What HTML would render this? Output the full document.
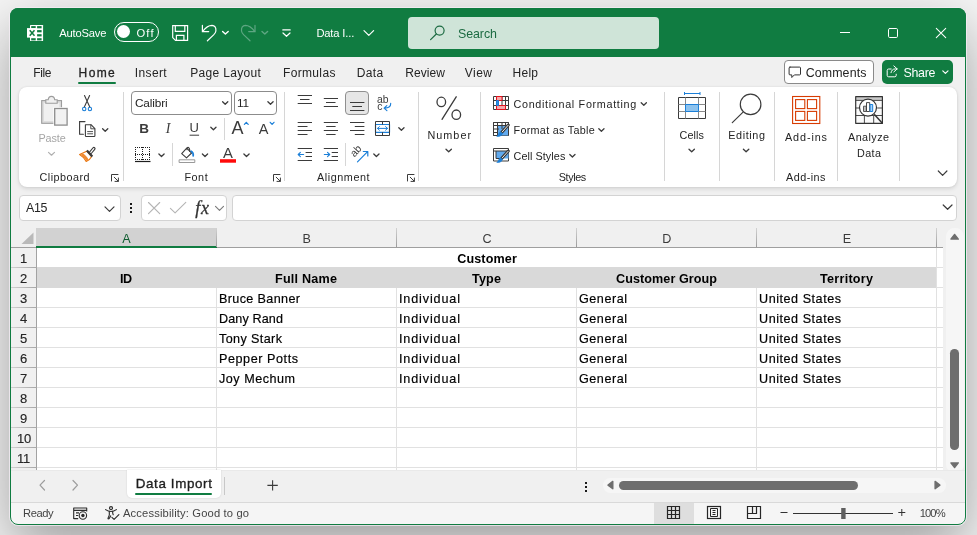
<!DOCTYPE html>
<html><head><meta charset="utf-8"><title>Excel</title>
<style>
*{box-sizing:border-box;margin:0;padding:0}
html,body{width:977px;height:535px;overflow:hidden;background:#f5f5f5}
body{background:#f5f5f5;font-family:"Liberation Sans",sans-serif;position:relative}
.a{position:absolute}
#labels{will-change:transform}
.t{position:absolute;white-space:nowrap;line-height:16px;height:16px;display:block}
#win{position:absolute;left:10px;top:8px;width:956px;height:517px;border-radius:8px;background:#f0f0f0;
 box-shadow:0 0 0 1px rgba(246,238,246,.75),0 22px 58px rgba(0,0,0,.36);overflow:hidden}
#winb{position:absolute;left:10px;top:8px;width:956px;height:517px;border-radius:8px;border:1px solid #107c41;pointer-events:none}
#title{position:absolute;left:0;top:0;width:956px;height:49px;background:#107c41}
#search{position:absolute;left:398px;top:9px;width:251px;height:32px;border-radius:4px;background:#cfe4d8}
#ribbon{position:absolute;left:9px;top:79px;width:938px;height:100px;border-radius:8px;background:#fff;
 box-shadow:0 2px 4px rgba(0,0,0,.11),0 0 2px rgba(0,0,0,.10)}
.sep{position:absolute;width:1px;background:#d6d6d6}
.box{position:absolute;background:#fff;border:1px solid #d3d3d3;border-radius:4px}
.cb{position:absolute;background:#fff;border:1px solid #8c8c8c;border-radius:4px}
#grid{position:absolute;left:27px;top:240px;width:906px;height:222px;background:#fff;overflow:hidden}
.hl{position:absolute;left:0;width:907px;height:1px;background:#e1e1e1}
.vl{position:absolute;top:0;width:1px;height:222px;background:#e1e1e1}
#status{position:absolute;left:0;top:494px;width:956px;height:23px;background:#f5f5f5;border-top:1px solid #d9d9d9}

</style></head>
<body>
<div id="win">
<div id="title"></div>
<div id="search"></div>
<div class="a" style="left:103.8px;top:14px;width:45px;height:19.6px;border:1px solid #fff;border-radius:10px"></div>
<div class="a" style="left:107px;top:17.3px;width:13px;height:13px;border-radius:50%;background:#fff"></div>
<div class="a" style="left:68.3px;top:74px;width:37.4px;height:2px;border-radius:1px;background:#107c41"></div>
<div class="a" style="left:774.3px;top:52.2px;width:89.6px;height:23.7px;border:1px solid #8a8a8a;border-radius:4px;background:#fff"></div>
<div class="a" style="left:872px;top:52.2px;width:71px;height:23.7px;border-radius:5px;background:#107c41"></div>
<div id="ribbon"></div>
<div class="sep" style="left:112.5px;top:84px;height:89px"></div>
<div class="sep" style="left:274.0px;top:84px;height:89px"></div>
<div class="sep" style="left:408.2px;top:84px;height:89px"></div>
<div class="sep" style="left:470.0px;top:84px;height:89px"></div>
<div class="sep" style="left:654.2px;top:84px;height:89px"></div>
<div class="sep" style="left:709.2px;top:84px;height:89px"></div>
<div class="sep" style="left:764.0px;top:84px;height:89px"></div>
<div class="sep" style="left:827.0px;top:84px;height:89px"></div>
<div class="sep" style="left:889.1px;top:84px;height:89px"></div>
<div class="sep" style="left:213.5px;top:109.5px;height:22.5px"></div>
<div class="sep" style="left:162.1px;top:135.0px;height:23.0px"></div>
<div class="sep" style="left:335.2px;top:135.3px;height:22.7px"></div>
<div class="cb" style="left:121px;top:83.2px;width:101px;height:23.6px"></div>
<div class="cb" style="left:224px;top:83.2px;width:43px;height:23.6px"></div>
<div class="cb" style="left:335.4px;top:83.2px;width:23.8px;height:23.6px;background:#e6e6e6;border-color:#8f8f8f"></div>
<div class="box" style="left:9px;top:187px;width:102px;height:26px"></div>
<div class="box" style="left:131px;top:187px;width:86px;height:26px"></div>
<div class="box" style="left:222px;top:187px;width:725px;height:26px"></div>
<div class="a" style="left:1px;top:220px;width:932px;height:20px;background:#f0f0f0;border-bottom:1px solid #9f9f9f"></div>
<div class="a" style="left:26.3px;top:220px;width:180.7px;height:20px;background:#d2d2d2;border-bottom:2px solid #107c41"></div>
<div class="a" style="left:206px;top:220px;width:1px;height:19px;background:linear-gradient(#d2d2d2,#9c9c9c)"></div>
<div class="a" style="left:386px;top:220px;width:1px;height:19px;background:linear-gradient(#d2d2d2,#9c9c9c)"></div>
<div class="a" style="left:566px;top:220px;width:1px;height:19px;background:linear-gradient(#d2d2d2,#9c9c9c)"></div>
<div class="a" style="left:746px;top:220px;width:1px;height:19px;background:linear-gradient(#d2d2d2,#9c9c9c)"></div>
<div class="a" style="left:926px;top:220px;width:1px;height:19px;background:linear-gradient(#d2d2d2,#9c9c9c)"></div>
<div class="a" style="left:1px;top:240px;width:26px;height:222px;background:#f0f0f0;border-right:1px solid #a2a2a2"></div>
<div class="a" style="left:1px;top:259px;width:26px;height:1px;background:linear-gradient(90deg,#d0d0d0,#a6a6a6)"></div>
<div class="a" style="left:1px;top:279px;width:26px;height:1px;background:linear-gradient(90deg,#d0d0d0,#a6a6a6)"></div>
<div class="a" style="left:1px;top:299px;width:26px;height:1px;background:linear-gradient(90deg,#d0d0d0,#a6a6a6)"></div>
<div class="a" style="left:1px;top:319px;width:26px;height:1px;background:linear-gradient(90deg,#d0d0d0,#a6a6a6)"></div>
<div class="a" style="left:1px;top:339px;width:26px;height:1px;background:linear-gradient(90deg,#d0d0d0,#a6a6a6)"></div>
<div class="a" style="left:1px;top:359px;width:26px;height:1px;background:linear-gradient(90deg,#d0d0d0,#a6a6a6)"></div>
<div class="a" style="left:1px;top:379px;width:26px;height:1px;background:linear-gradient(90deg,#d0d0d0,#a6a6a6)"></div>
<div class="a" style="left:1px;top:399px;width:26px;height:1px;background:linear-gradient(90deg,#d0d0d0,#a6a6a6)"></div>
<div class="a" style="left:1px;top:419px;width:26px;height:1px;background:linear-gradient(90deg,#d0d0d0,#a6a6a6)"></div>
<div class="a" style="left:1px;top:439px;width:26px;height:1px;background:linear-gradient(90deg,#d0d0d0,#a6a6a6)"></div>
<div class="a" style="left:1px;top:459px;width:26px;height:1px;background:linear-gradient(90deg,#d0d0d0,#a6a6a6)"></div>
<div id="grid">
<div class="a" style="left:0;top:19px;width:900px;height:21px;background:#d9d9d9"></div>
<div class="hl" style="top:59px"></div>
<div class="hl" style="top:79px"></div>
<div class="hl" style="top:99px"></div>
<div class="hl" style="top:119px"></div>
<div class="hl" style="top:139px"></div>
<div class="hl" style="top:159px"></div>
<div class="hl" style="top:179px"></div>
<div class="hl" style="top:199px"></div>
<div class="hl" style="top:219px"></div>
<div class="hl" style="top:239px"></div>
<div class="vl" style="left:179px;top:40px"></div>
<div class="vl" style="left:359px;top:40px"></div>
<div class="vl" style="left:539px;top:40px"></div>
<div class="vl" style="left:719px;top:40px"></div>
<div class="vl" style="left:899px;top:0"></div>
<div class="hl" style="top:19px;left:900px;width:7px"></div><div class="hl" style="top:39px;left:900px;width:7px"></div>
</div>
<div class="a" style="left:936px;top:220px;width:17.5px;height:245px;border-radius:8.5px;background:#f6f6f6"></div>
<div class="a" style="left:940.1px;top:340.8px;width:8.7px;height:101px;border-radius:4.3px;background:#6e6e6e"></div>
<div class="a" style="left:0;top:462px;width:956px;height:33px;background:#f0f0f0;border-top:1px solid #e9e9e9"></div>
<div class="a" style="left:116.6px;top:462px;width:94px;height:28.3px;border-radius:0 0 5px 5px;background:#fff;box-shadow:0 0 2px rgba(0,0,0,.14)"></div>
<div class="a" style="left:125.3px;top:484.6px;width:76.7px;height:2.1px;border-radius:1px;background:#107c41"></div>
<div class="a" style="left:213.9px;top:468.8px;width:1px;height:17.8px;background:#c8c8c8"></div>
<div class="a" style="left:592.8px;top:469.6px;width:343.6px;height:15.2px;border-radius:7.5px;background:#f6f6f6"></div>
<div class="a" style="left:608.7px;top:473px;width:239.5px;height:9.2px;border-radius:4.6px;background:#6e6e6e"></div>
<div id="status"></div>
<div class="a" style="left:644px;top:495px;width:40px;height:22px;background:#dedede"></div>
</div>
<div id="winb"></div>
<svg id="ico" class="a" style="left:0;top:0;will-change:transform" width="977" height="535" viewBox="0 0 977 535" fill="none" stroke-linecap="round" stroke-linejoin="round">
<!-- ===== title bar ===== -->
<g stroke="#fff" stroke-width="1.2">
 <!-- excel logo -->
 <rect x="30" y="25" width="13.1" height="16" rx="0.5" fill="#fff" stroke="none"/>
 <g fill="#107c41" stroke="none"><rect x="31.2" y="26.1" width="4.5" height="2.2"/><rect x="37.1" y="26.1" width="4.5" height="2.2"/><rect x="31.2" y="30.1" width="4.5" height="2.2"/><rect x="37.1" y="30.1" width="4.5" height="2.2"/><rect x="31.2" y="34.2" width="4.5" height="2.2"/><rect x="37.1" y="34.2" width="4.5" height="2.2"/><rect x="31.2" y="38.2" width="4.5" height="2.2"/><rect x="37.1" y="38.2" width="4.5" height="2.2"/></g>
 <rect x="27" y="28.1" width="9.6" height="9.5" fill="#fff" stroke="none"/>
 <path d="M29.700 30.300L34.500 35.800M34.500 30.300L29.700 35.800" stroke="#107c41" stroke-width="1.500" stroke-linecap="butt"/>
 <!-- save -->
 <path d="M172.700 25.700H187.600V40.400H175.500L172.700 37.600Z" stroke-linejoin="miter"/>
 <path d="M175.300 25.700V31.400H184.800V25.700M176.400 40.400V35.300H183.900V40.400" stroke-linejoin="miter"/>
 <!-- undo -->
 <path d="M202.400 25.400V31.600H208.700" stroke-width="1.200" stroke-linejoin="miter"/>
 <path d="M202.700 31.300C205.600 27.500 208.600 25.300 212 25.300C214.800 25.400 216.200 27.700 215.900 31C215.700 32.600 214.800 33.700 213.600 34.900L207.400 40.800" stroke-width="1.200"/>
 <path d="M222.600 31.400L225.400 34L228.200 31.400" stroke-width="1.400"/>
 <!-- customize qat -->
 <path d="M282.8 29.9H290.2M283 33L286.5 36.3L290 33" stroke-width="1.2"/>
 <!-- title chevron -->
 <path d="M364 30.6L368.8 35.4L373.6 30.6" stroke-width="1.2"/>
 <!-- window controls -->
 <path d="M840 32.500H850" stroke-width="1" stroke-linecap="butt"/>
 <rect x="888.500" y="28.500" width="9" height="9" rx="1.200" stroke-width="1"/>
 <path d="M936.300 28.300L945.700 37.700M945.700 28.300L936.300 37.700" stroke-width="1.050"/>
</g>
<!-- redo (disabled) -->
<g stroke="#5ea682" stroke-width="1.200">
 <path d="M255 25.400V31.600H248.700" stroke-linejoin="miter"/>
 <path d="M254.700 31.300C251.800 27.500 248.800 25.300 245.400 25.300C242.600 25.400 241.200 27.700 241.500 31C241.700 32.600 242.600 33.700 243.800 34.900L250 40.800"/>
 <path d="M262 31.400L264.800 34L267.600 31.400" stroke-width="1.400"/>
</g>
<!-- search icon -->
<g stroke="#1c6b42" stroke-width="1.2">
 <circle cx="439.6" cy="30.6" r="4.5"/><path d="M436.3 34L430.6 39.6"/>
</g>
<!-- comments icon -->
<g stroke="#333" stroke-width="1" transform="translate(0 .6)">
 <path d="M790 66.5h9.6a.9.9 0 0 1 .9.9v6a.9.9 0 0 1-.9.9h-5.2l-2.6 2.6v-2.6h-1.8a.9.9 0 0 1-.9-.9v-6a.9.9 0 0 1 .9-.9z"/>
</g>
<!-- share icon -->
<g stroke="#fff" stroke-width="1" transform="translate(-.8 -.3)">
 <path d="M892 69.3h-2.6a1.4 1.4 0 0 0-1.4 1.4v5a1.4 1.4 0 0 0 1.4 1.4h6.2a1.4 1.4 0 0 0 1.4-1.4v-1.2"/>
 <path d="M894.6 66.2l3.4 3-3.4 3M898 69.2h-2c-2.4 0-3.8 1.6-4.2 3.8"/>
 <path d="M943.6 71.2L946.2 73.7L948.8 71.2" stroke-width="1.2"/>
</g>
<!-- ===== ribbon: clipboard ===== -->
<g stroke="#9c9c9c" stroke-width="1.100" stroke-linejoin="miter">
 <rect x="41.700" y="100.600" width="19.800" height="22.700" fill="#dddddd"/>
 <rect x="44" y="103" width="15.400" height="18" fill="#f0f0f0" stroke="none"/>
 <path d="M45.800 103.200V99.800H48.200C48.600 95.200 54.300 95.200 54.700 99.800H57.200V103.200Z" fill="#f0f0f0"/>
 <rect x="53.400" y="107.200" width="15" height="19.200" fill="#fff" stroke="none"/>
 <rect x="54.700" y="108.500" width="12.400" height="16.600" fill="#f2f2f2" stroke="#8e8e8e" stroke-width="1.300"/>
 <path d="M48.500 152.400L51.500 155.200L54.500 152.400" stroke="#b0b0b0" stroke-width="1.200" stroke-linejoin="round"/>
</g>
<!-- scissors -->
<g stroke-width="1.1">
 <path d="M84.5 95.6L90 107.4M89.6 95.6L84.1 107.4" stroke="#3b3b3b"/>
 <circle cx="84.2" cy="109" r="1.7" stroke="#1b7fd8"/><circle cx="89.9" cy="109" r="1.7" stroke="#1b7fd8"/>
</g>
<!-- copy -->
<g stroke="#3b3b3b" stroke-width="1.1">
 <path d="M85 121.6H79.6V134.3H83.4" stroke-linejoin="miter"/>
 <path d="M85.4 124.7h5.6l3.9 3.9v7.1a.8.8 0 0 1-.8.8h-7.900a.8.8 0 0 1-.8-.8z" fill="#fff"/>
 <path d="M90.8 124.900v3.900h3.900" stroke-width="0.9"/>
 <path d="M87.6 131.6h5M87.6 133.8h5" stroke-width="0.9"/>
 <path d="M102.6 128.700L105.2 131.200L107.8 128.700" stroke-width="1.3"/>
</g>
<!-- format painter -->
<g stroke-width="1">
 <path d="M86.700 151.200L79.600 154.500C82.500 156.200 84.800 158.700 86.200 161.500C88.600 160.400 90.600 158.600 91.700 156.500Z" fill="#fff" stroke="#e8740c" stroke-width="1.100"/>
 <path d="M80.300 154.700C83 156.300 85 158.500 86.300 161L88.600 159.600C87.300 157.300 85.400 155.200 83.100 153.600Z" fill="#ef8a32" stroke="none"/>
 <path d="M86.900 150.400L92.300 156.500" stroke="#3b3b3b" stroke-width="2.200" stroke-linecap="butt"/>
 <path d="M90.600 152.500L93.900 148.600" stroke="#3b3b3b" stroke-width="3.400" stroke-linecap="round"/>
 <path d="M90.800 152.300L93.800 148.700" stroke="#fff" stroke-width="1.300" stroke-linecap="round"/>
</g>
<!-- dialog launchers -->
<g stroke="#3b3b3b" stroke-width="1">
 <path d="M111.500 181V174.500H118M114.200 177.200l4 4M118.400 178v3.400H115"/>
 <path d="M273.500 181V174.500H280M276.200 177.200l4 4M280.400 178v3.400H277"/>
 <path d="M407.500 181V174.500H414M410.200 177.200l4 4M414.400 178v3.400H411"/>
</g>
<!-- ===== ribbon: font ===== -->
<g stroke="#3b3b3b" stroke-width="1.3">
 <path d="M222.600 101.800L225.200 104.300L227.800 101.800"/>
 <path d="M267.900 101.800L270.500 104.300L273.100 101.800"/>
 <path d="M210.800 127.300L213.400 129.800L216 127.300"/>
 <path d="M158.900 154L161.500 156.500L164.100 154"/>
 <path d="M202.400 154L205 156.500L207.600 154"/>
 <path d="M243.900 154L246.500 156.500L249.100 154"/>
</g>
<g fill="#3b3b3b" stroke="none" font-family="Liberation Sans, sans-serif">
 <text x="139.300" y="132.800" font-size="13.500" font-weight="bold">B</text>
 <text x="165.800" y="132.800" font-size="14" font-style="italic" font-family="Liberation Serif, serif">I</text>
 <text x="189.400" y="132.400" font-size="13">U</text>
 <text x="231.400" y="133.900" font-size="18">A</text>
 <text x="258.800" y="133.900" font-size="14.500">A</text>
 <text x="223" y="157.700" font-size="14.800">A</text>
</g>
<path d="M190 135.200H198.700" stroke="#3b3b3b" stroke-width="1"/>
<path d="M244.400 124.400L246.300 122.300L248.200 124.400M270.200 122.300L272.100 124.400L274 122.300" stroke="#1b7fd8" stroke-width="1.2"/>
<!-- borders -->
<g stroke="#1f1f1f">
 <path d="M135 147.500H150.500M135 159.500H150.500M135 154.500H150.500" stroke-width="1" stroke-dasharray="1 1" stroke-linecap="butt"/>
 <path d="M135.500 147V160M142.500 147V160M149.500 147V160" stroke-width="1" stroke-dasharray="1 1" stroke-linecap="butt"/>
 <path d="M135 161.500H150.500" stroke-width="1.200" stroke-linecap="butt"/>
</g>
<!-- fill bucket -->
<g stroke="#3b3b3b" stroke-width="1.100">
 <path d="M181.700 153.700L186.700 148.100L191.600 153L186.500 157.900Z" fill="#fff"/>
 <path d="M186.900 149.800c-.300-2.300 1.400-3.100 2.200-1.700c.500 .800 .700 1.900 .700 3.300" />
 <path d="M191.200 151.200c1.700 .900 2.300 2.600 2 4.600" stroke="#1b7fd8" stroke-width="1.700"/>
 <rect x="179.500" y="159.800" width="15.300" height="2.700" fill="#fff" stroke="#999" stroke-width="1"/>
</g>
<rect x="220" y="159.200" width="16" height="3.500" fill="#ff0a0a"/>
<!-- ===== ribbon: alignment ===== -->
<g stroke="#3b3b3b" stroke-width="1" stroke-linecap="butt">
 <!-- top / middle / bottom -->
 <path d="M297.700 95.500H312M300 99.500H309.500M297.700 103.500H312"/>
 <path d="M323.800 98.500H338M326 102.500H335.500M323.800 106.500H338"/>
 <path d="M350 102.500H364.400M352.300 106.500H362M350 110.500H364.400"/>
 <!-- left / center / right -->
 <path d="M297.700 122.500H312M297.700 126.500H307.500M297.700 130.500H312M297.700 134.500H307.500"/>
 <path d="M323.800 122.500H338M326.200 126.500H335.600M323.800 130.500H338M326.200 134.500H335.600"/>
 <path d="M350 122.500H364.400M354.800 126.500H364.400M350 130.500H364.400M354.800 134.500H364.400"/>
 <!-- indents -->
 <path d="M297.700 148.500H312M305.600 152.500H312M305.600 156.500H312M297.700 160.500H312"/>
 <path d="M323.800 148.500H338M331.700 152.500H338M331.700 156.500H338M323.800 160.500H338"/>
</g>
<g stroke="#1b7fd8" stroke-width="1.100">
 <path d="M298.300 154.500H303.600M300.400 152.300L298.200 154.500L300.400 156.700"/>
 <path d="M324.300 154.500H329.600M327.500 152.300L329.700 154.500L327.500 156.700"/>
</g>
<!-- wrap text -->
<g fill="#3b3b3b" stroke="none" font-family="Liberation Sans, sans-serif" font-size="10.400">
 <text x="377" y="102.800">ab</text><text x="377.200" y="109.800">c</text>
</g>
<path d="M390.700 103.400C390.900 106.800 388.400 108.200 384.300 108.100M386.800 105.600L384.100 108.100L386.900 110.600" stroke="#1b7fd8" stroke-width="1.200"/>
<!-- merge & center -->
<g stroke-linecap="butt">
 <rect x="375.500" y="124.500" width="14" height="7.800" fill="#fff" stroke="#1b7fd8" stroke-width="1.200"/>
 <path d="M375.500 121.500H389.500V135.500H375.500zM382.500 121.500V124.500M382.500 132.300V135.500" stroke="#3b3b3b" stroke-width="1"/>
 <path d="M377.600 128.400H387.400M379.400 126.600L377.500 128.400L379.400 130.200M385.600 126.600L387.500 128.400L385.600 130.200" stroke="#1b7fd8" stroke-width="1" stroke-linecap="round"/>
</g>
<path d="M398.800 127.800L401.400 130.300L404 127.800M373.800 154L376.400 156.500L379 154" stroke="#3b3b3b" stroke-width="1.300"/>
<!-- orientation -->
<g>
 <text transform="translate(354.400 157.400) rotate(-47)" fill="#3b3b3b" stroke="none" font-family="Liberation Sans, sans-serif" font-size="10.400">ab</text>
 <path d="M357.500 161.800L367.600 151.700M363.300 151.500H367.800V156" stroke="#1b7fd8" stroke-width="1.200"/>
</g>
<!-- ===== number ===== -->
<g stroke="#3b3b3b" stroke-width="1.300">
 <ellipse cx="441.300" cy="101.900" rx="4.300" ry="4.700"/><ellipse cx="456.300" cy="114.700" rx="4.300" ry="4.700"/>
 <path d="M456.200 96.800L442 119.300"/>
 <path d="M446 149.200L448.700 151.800L451.400 149.200"/>
 <path d="M689 149.200L691.700 151.800L694.400 149.200"/>
 <path d="M743.400 149.200L746.100 151.800L748.800 149.200"/>
 <path d="M641.200 102.800L643.800 105.300L646.400 102.800M598.800 128.800L601.400 131.300L604 128.800M569.800 154.500L572.400 157L575 154.500"/>
</g>
<!-- ===== styles icons ===== -->
<g stroke-linecap="butt" stroke-width="1">
 <!-- conditional formatting -->
 <rect x="493.500" y="96.500" width="15" height="13" fill="#fff" stroke="#3b3b3b"/>
 <path d="M496.500 96.500V109.500M502 96.500V109.500M505.500 96.500V109.500M493.500 100.500H508.500M493.500 105.500H508.500" stroke="#3b3b3b"/>
 <rect x="496.500" y="96.500" width="5.500" height="4" fill="#f5a9ab" stroke="#e8111c"/>
 <rect x="496.500" y="105.500" width="9" height="4" fill="#f5a9ab" stroke="#e8111c"/>
 <rect x="496.500" y="100.500" width="2" height="5" fill="#2f8be0" stroke="#1b7fd8"/>
 <!-- format as table -->
 <rect x="493.500" y="122.500" width="15" height="13" fill="#fff" stroke="#3b3b3b"/>
 <rect x="497.500" y="125.500" width="11" height="10" fill="#62aaee" stroke="none"/>
 <path d="M497.500 122.500V135.500M502 122.500V129M505.500 122.500V126M493.500 125.500H508.500M493.500 129H499M493.500 132.500H497.500" stroke="#3b3b3b"/>
 <path d="M493.500 122.500H508.500V135.500M493.500 122.500V135.500H497" stroke="#3b3b3b" fill="none"/>
 <path d="M508.300 125L501.800 132.300" stroke="#3b3b3b" stroke-width="3" stroke-linecap="round"/>
 <path d="M508.100 125.300L502.200 131.900" stroke="#e6e6e6" stroke-width="1" stroke-linecap="round"/>
 <path d="M502.600 133.400c-.600 2-2.700 3.200-5.800 3.100 1.600-1.100 1.600-3.400 3.400-4.800z" fill="#1b7fd8" stroke="#1b7fd8" stroke-width="0.600" stroke-linejoin="round"/>
 <!-- cell styles -->
 <rect x="493.500" y="148.500" width="15" height="12.500" fill="#fff" stroke="#3b3b3b"/>
 <rect x="496" y="151" width="12.500" height="7.500" fill="#62aaee" stroke="none"/>
 <path d="M493.500 151H508.500M496 151V158.500H500" stroke="#3b3b3b"/>
 <path d="M508.300 151L501.800 158.300" stroke="#3b3b3b" stroke-width="3" stroke-linecap="round"/>
 <path d="M508.100 151.300L502.200 157.900" stroke="#e6e6e6" stroke-width="1" stroke-linecap="round"/>
 <path d="M502.600 159.400c-.600 2-2.700 3.200-5.800 3.100 1.600-1.100 1.600-3.400 3.400-4.800z" fill="#1b7fd8" stroke="#1b7fd8" stroke-width="0.600" stroke-linejoin="round"/>
</g>
<!-- ===== cells ===== -->
<g stroke-linecap="butt" stroke-width="1">
 <rect x="678.500" y="97.500" width="27" height="21" fill="#fff" stroke="#3b3b3b"/>
 <path d="M685.500 97.500V118.500M698.500 97.500V118.500M678.500 104.500H705.500M678.500 111.500H705.500" stroke="#8a8a8a"/>
 <rect x="685.500" y="104.500" width="13" height="7" fill="#8ec3ee" stroke="#1b7fd8"/>
 <path d="M684.500 93.500H700M684.500 92V95M700 92V95" stroke="#1b7fd8"/>
</g>
<!-- ===== editing ===== -->
<g stroke="#3b3b3b" stroke-width="1.200">
 <circle cx="750.600" cy="104.400" r="10.300"/><path d="M743.300 111.900L732.300 122.600"/>
</g>
<!-- ===== add-ins ===== -->
<g stroke="#d83b01" stroke-width="1.100" stroke-linecap="butt" stroke-linejoin="miter">
 <rect x="792.600" y="96.500" width="27.200" height="27"/>
 <rect x="795.600" y="99.600" width="9.200" height="9"/><rect x="807.400" y="99.600" width="9.200" height="9"/>
 <rect x="795.600" y="111.400" width="9.200" height="9"/><rect x="807.400" y="111.400" width="9.200" height="9"/>
</g>
<!-- ===== analyze data ===== -->
<g stroke-linecap="butt" stroke-width="1">
 <rect x="855.700" y="96.600" width="26.700" height="26.700" fill="#fafafa" stroke="none"/>
 <rect x="856" y="97" width="26.300" height="3" fill="#c9c9c9" stroke="none"/>
 <path d="M855.700 100.400H882.400M855.700 108H859M877.200 108H882.400M855.700 115.500H882.400M864.400 115.500V123.300M873.700 115.500V123.300" stroke="#4a4a4a"/>
 <rect x="855.700" y="96.600" width="26.700" height="26.700" fill="none" stroke="#333" stroke-width="1.200"/>
 <circle cx="868" cy="107.600" r="8.500" fill="#fff" stroke="#333" stroke-width="1.200"/>
 <rect x="863.500" y="106.200" width="2.800" height="5.300" fill="#c4c4c4" stroke="#4a4a4a" stroke-width="0.900"/>
 <rect x="866.500" y="102.600" width="3.200" height="8.900" fill="#fff" stroke="#333" stroke-width="0.900"/>
 <rect x="870.100" y="104.500" width="2.600" height="7" fill="#a6d3fb" stroke="#1b7fd8" stroke-width="1"/>
 <path d="M874.200 114.300L882.600 123.400" stroke="#333" stroke-width="1.500"/>
</g>
<path d="M938.300 171L942.600 175.300L946.900 171" stroke="#3b3b3b" stroke-width="1.200"/>
<!-- ===== formula bar ===== -->
<path d="M105 206.800L109.500 211.300L114 206.800" stroke="#3b3b3b" stroke-width="1.200"/>
<g fill="#1a1a1a" stroke="none"><rect x="130" y="203" width="2" height="2"/><rect x="130" y="207" width="2" height="2"/><rect x="130" y="211" width="2" height="2"/></g>
<g stroke="#b4b4b4" stroke-width="1.100">
 <path d="M148.500 202.500L159.700 213.700M159.700 202.500L148.500 213.700"/>
 <path d="M170.400 208.300L175.100 212.800L185.800 202.400"/>
</g>
<path d="M215.500 206.300L219.500 210.300L223.500 206.300" stroke="#7a7a7a" stroke-width="1.100"/>
<path d="M943.200 205L947.600 209.300L952 205" stroke="#3b3b3b" stroke-width="1.200"/>
<!-- select all triangle -->
<path d="M33.500 232.500V244H21.500z" fill="#b9b9b9" stroke="none"/>
<!-- v scrollbar arrows -->
<g fill="#6e6e6e" stroke="#6e6e6e" stroke-width="1.400">
 <path d="M954.600 234.400L958.300 239.100H950.900z"/>
 <path d="M954.600 467.600L958.300 462.900H950.900z"/>
 <path d="M608 485.100L612.800 481.400V488.800z"/>
 <path d="M939.900 485.100L935.100 481.400V488.800z"/>
</g>
<!-- sheet nav -->
<g stroke="#9c9c9c" stroke-width="1.200">
 <path d="M44.500 480.500L40 485.200L44.500 490"/>
 <path d="M73 480.500L77.500 485.200L73 490"/>
</g>
<path d="M267.400 485.400H277.800M272.600 480.200V490.600" stroke="#3b3b3b" stroke-width="1.100" stroke-linecap="butt"/>
<g fill="#1a1a1a" stroke="none"><rect x="585" y="482" width="2" height="2"/><rect x="585" y="486" width="2" height="2"/><rect x="585" y="490" width="2" height="2"/></g>
<!-- ===== status bar ===== -->
<g stroke="#444" stroke-width="1" stroke-linecap="butt">
 <!-- macro -->
 <path d="M73.700 519V508H86.700V511.600M73.700 510.400H86.700M73.700 518.600H78.200M76 512.900H79M76 515.500H78.200" stroke="#2b2b2b" stroke-width="1.100"/>
 <circle cx="82.900" cy="515.500" r="3.700" fill="#f5f5f5" stroke="#2b2b2b" stroke-width="1.100"/><circle cx="82.900" cy="515.500" r="1.700" fill="#2b2b2b" stroke="none"/>
 <!-- accessibility -->
 <g stroke="#2b2b2b" stroke-width="1.150" stroke-linecap="round" fill="none">
 <circle cx="111" cy="508.100" r="1.500"/>
 <path d="M105.600 509.600c1.800 1.300 3.400 1.900 5.400 1.900s3.600-.600 5.400-1.900"/>
 <path d="M109.300 511.400c.400 2.400 .200 4.600-1.200 6.600c-.400 .700 .600 1.200 1.100 .500l1.500-2.600M112.700 511.400c-.200 1.200 0 2.300 .500 3.300"/>
 <path d="M111.900 517.300l2.200 2.100 4.800-4.700"/>
 </g>
 <!-- normal view -->
 <g stroke="#262626" stroke-width="1.200" fill="none" stroke-linejoin="miter">
 <path d="M667.500 506.500H679.500V518.500H667.500ZM671.500 506.500V518.500M675.500 506.500V518.500M667.500 510.500H679.500M667.500 514.500H679.500"/>
 <!-- page layout view -->
 <rect x="707.500" y="506.500" width="13" height="12"/>
 <path d="M710.500 508.500H717.500V516.500H710.500Z" stroke-width="1"/><path d="M712.500 510.500H715.500M712.500 512.500H715.500M712.500 514.500H715.500" stroke-width="1"/>
 <!-- page break view -->
 <path d="M747.500 506.500H760.500V518.500H747.500ZM752.500 506.500V513.500M747.500 513.500H756.500V506.500"/>
 </g>
 <!-- zoom -->
 <path d="M780.500 512.500H787.500M793 513.500H893M898.300 512.500H905.300M901.800 509V516" stroke="#333"/>
</g>
<rect x="841.200" y="508" width="4.400" height="11" fill="#5f5f5f" stroke="none"/>
</svg>

<div id="labels">
<span class="t" style="left:59.30px;top:24.80px;font-size:11.2px;color:#ffffff;letter-spacing:-0.202px">AutoSave</span>
<span class="t" style="left:136.50px;top:24.60px;font-size:11.2px;color:#ffffff;letter-spacing:1.141px">Off</span>
<span class="t" style="left:316.40px;top:24.80px;font-size:11.2px;color:#ffffff;letter-spacing:-0.161px">Data I...</span>
<span class="t" style="left:458.00px;top:25.70px;font-size:12.4px;color:#1c6b42;letter-spacing:-0.073px">Search</span>
<span class="t" style="left:33.20px;top:65.00px;font-size:12px;color:#242424;letter-spacing:-0.348px">File</span>
<span class="t" style="left:78.60px;top:65.00px;font-size:12px;color:#242424;-webkit-text-stroke:0.3px currentColor;letter-spacing:1.395px">Home</span>
<span class="t" style="left:134.80px;top:65.00px;font-size:12px;color:#242424;letter-spacing:0.357px">Insert</span>
<span class="t" style="left:190.20px;top:65.00px;font-size:12px;color:#242424;letter-spacing:0.331px">Page Layout</span>
<span class="t" style="left:283.00px;top:65.00px;font-size:12px;color:#242424;letter-spacing:0.341px">Formulas</span>
<span class="t" style="left:356.80px;top:65.00px;font-size:12px;color:#242424;letter-spacing:0.347px">Data</span>
<span class="t" style="left:405.20px;top:65.00px;font-size:12px;color:#242424;letter-spacing:0.088px">Review</span>
<span class="t" style="left:464.80px;top:65.00px;font-size:12px;color:#242424;letter-spacing:0.468px">View</span>
<span class="t" style="left:512.60px;top:65.00px;font-size:12px;color:#242424;letter-spacing:0.237px">Help</span>
<span class="t" style="left:805.70px;top:64.60px;font-size:12.4px;color:#242424;letter-spacing:0.113px">Comments</span>
<span class="t" style="left:903.40px;top:64.60px;font-size:12.4px;color:#ffffff;letter-spacing:-0.270px">Share</span>
<span class="t" style="left:38.50px;top:129.50px;font-size:10.8px;color:#a6a6a6;letter-spacing:-0.077px">Paste</span>
<span class="t" style="left:39.60px;top:168.50px;font-size:10.8px;color:#242424;letter-spacing:0.473px">Clipboard</span>
<span class="t" style="left:134.90px;top:94.70px;font-size:11.8px;color:#242424;letter-spacing:-0.123px">Calibri</span>
<span class="t" style="left:236.90px;top:94.70px;font-size:11.8px;color:#242424">11</span>
<span class="t" style="left:184.40px;top:168.50px;font-size:10.8px;color:#242424;letter-spacing:0.564px">Font</span>
<span class="t" style="left:317.00px;top:168.50px;font-size:10.8px;color:#242424;letter-spacing:0.573px">Alignment</span>
<span class="t" style="left:427.50px;top:126.50px;font-size:10.8px;color:#242424;letter-spacing:1.019px">Number</span>
<span class="t" style="left:513.50px;top:96.00px;font-size:10.8px;color:#242424;letter-spacing:0.675px">Conditional Formatting</span>
<span class="t" style="left:513.50px;top:121.50px;font-size:10.8px;color:#242424;letter-spacing:0.292px">Format as Table</span>
<span class="t" style="left:513.50px;top:147.90px;font-size:10.8px;color:#242424;letter-spacing:0.078px">Cell Styles</span>
<span class="t" style="left:558.70px;top:168.50px;font-size:10.8px;color:#242424;letter-spacing:-0.381px">Styles</span>
<span class="t" style="left:679.60px;top:126.80px;font-size:10.8px;color:#242424;letter-spacing:0.100px">Cells</span>
<span class="t" style="left:728.30px;top:126.50px;font-size:10.8px;color:#242424;letter-spacing:0.614px">Editing</span>
<span class="t" style="left:785.00px;top:128.50px;font-size:10.8px;color:#242424;letter-spacing:0.898px">Add-ins</span>
<span class="t" style="left:786.00px;top:168.50px;font-size:10.8px;color:#242424;letter-spacing:0.482px">Add-ins</span>
<span class="t" style="left:848.00px;top:128.50px;font-size:10.8px;color:#242424;letter-spacing:0.430px">Analyze</span>
<span class="t" style="left:857.00px;top:145.20px;font-size:10.8px;color:#242424;letter-spacing:0.396px">Data</span>
<span class="t" style="left:26.00px;top:199.90px;font-size:12.4px;color:#242424;letter-spacing:-0.273px">A15</span>
<span class="t" style="left:195.20px;top:199.80px;font-size:18px;color:#333;-webkit-text-stroke:0.3px currentColor;font-family:'Liberation Serif', serif;font-style:italic;letter-spacing:0.800px">fx</span>
<span class="t" style="left:122.30px;top:230.70px;font-size:12.6px;color:#0e5c2f">A</span>
<span class="t" style="left:302.60px;top:230.70px;font-size:12.6px;color:#3b3b3b">B</span>
<span class="t" style="left:482.60px;top:230.70px;font-size:12.6px;color:#3b3b3b">C</span>
<span class="t" style="left:662.20px;top:230.70px;font-size:12.6px;color:#3b3b3b">D</span>
<span class="t" style="left:842.80px;top:230.70px;font-size:12.6px;color:#3b3b3b">E</span>
<span class="t" style="left:20.10px;top:251.10px;font-size:13px;color:#262626;-webkit-text-stroke:0.15px currentColor">1</span>
<span class="t" style="left:20.10px;top:271.10px;font-size:13px;color:#262626;-webkit-text-stroke:0.15px currentColor">2</span>
<span class="t" style="left:20.10px;top:291.10px;font-size:13px;color:#262626;-webkit-text-stroke:0.15px currentColor">3</span>
<span class="t" style="left:20.10px;top:311.10px;font-size:13px;color:#262626;-webkit-text-stroke:0.15px currentColor">4</span>
<span class="t" style="left:20.10px;top:331.10px;font-size:13px;color:#262626;-webkit-text-stroke:0.15px currentColor">5</span>
<span class="t" style="left:20.10px;top:351.10px;font-size:13px;color:#262626;-webkit-text-stroke:0.15px currentColor">6</span>
<span class="t" style="left:20.10px;top:371.10px;font-size:13px;color:#262626;-webkit-text-stroke:0.15px currentColor">7</span>
<span class="t" style="left:20.10px;top:391.10px;font-size:13px;color:#262626;-webkit-text-stroke:0.15px currentColor">8</span>
<span class="t" style="left:20.10px;top:411.10px;font-size:13px;color:#262626;-webkit-text-stroke:0.15px currentColor">9</span>
<span class="t" style="left:17.00px;top:431.10px;font-size:13px;color:#262626;-webkit-text-stroke:0.15px currentColor;letter-spacing:-0.200px">10</span>
<span class="t" style="left:17.00px;top:451.10px;font-size:13px;color:#262626;-webkit-text-stroke:0.15px currentColor;letter-spacing:-0.200px">11</span>
<span class="t" style="left:457.20px;top:251.20px;font-size:12.6px;color:#000000;font-weight:bold;letter-spacing:0.117px">Customer</span>
<span class="t" style="left:120.00px;top:271.20px;font-size:12.6px;color:#000000;font-weight:bold;letter-spacing:-0.594px">ID</span>
<span class="t" style="left:275.00px;top:271.20px;font-size:12.6px;color:#000000;font-weight:bold;letter-spacing:0.227px">Full Name</span>
<span class="t" style="left:472.00px;top:271.20px;font-size:12.6px;color:#000000;font-weight:bold;letter-spacing:0.177px">Type</span>
<span class="t" style="left:616.00px;top:271.20px;font-size:12.6px;color:#000000;font-weight:bold;letter-spacing:0.072px">Customer Group</span>
<span class="t" style="left:820.00px;top:271.20px;font-size:12.6px;color:#000000;font-weight:bold;letter-spacing:0.268px">Territory</span>
<span class="t" style="left:219.00px;top:291.20px;font-size:12.6px;color:#000000;-webkit-text-stroke:0.18px currentColor;letter-spacing:0.362px">Bruce Banner</span>
<span class="t" style="left:399.00px;top:291.20px;font-size:12.6px;color:#000000;-webkit-text-stroke:0.18px currentColor;letter-spacing:0.865px">Individual</span>
<span class="t" style="left:579.00px;top:291.20px;font-size:12.6px;color:#000000;-webkit-text-stroke:0.18px currentColor;letter-spacing:0.531px">General</span>
<span class="t" style="left:759.00px;top:291.20px;font-size:12.6px;color:#000000;-webkit-text-stroke:0.18px currentColor;letter-spacing:0.533px">United States</span>
<span class="t" style="left:219.00px;top:311.20px;font-size:12.6px;color:#000000;-webkit-text-stroke:0.18px currentColor;letter-spacing:0.123px">Dany Rand</span>
<span class="t" style="left:399.00px;top:311.20px;font-size:12.6px;color:#000000;-webkit-text-stroke:0.18px currentColor;letter-spacing:0.865px">Individual</span>
<span class="t" style="left:579.00px;top:311.20px;font-size:12.6px;color:#000000;-webkit-text-stroke:0.18px currentColor;letter-spacing:0.531px">General</span>
<span class="t" style="left:759.00px;top:311.20px;font-size:12.6px;color:#000000;-webkit-text-stroke:0.18px currentColor;letter-spacing:0.533px">United States</span>
<span class="t" style="left:219.00px;top:331.20px;font-size:12.6px;color:#000000;-webkit-text-stroke:0.18px currentColor;letter-spacing:0.389px">Tony Stark</span>
<span class="t" style="left:399.00px;top:331.20px;font-size:12.6px;color:#000000;-webkit-text-stroke:0.18px currentColor;letter-spacing:0.865px">Individual</span>
<span class="t" style="left:579.00px;top:331.20px;font-size:12.6px;color:#000000;-webkit-text-stroke:0.18px currentColor;letter-spacing:0.531px">General</span>
<span class="t" style="left:759.00px;top:331.20px;font-size:12.6px;color:#000000;-webkit-text-stroke:0.18px currentColor;letter-spacing:0.533px">United States</span>
<span class="t" style="left:219.00px;top:351.20px;font-size:12.6px;color:#000000;-webkit-text-stroke:0.18px currentColor;letter-spacing:0.562px">Pepper Potts</span>
<span class="t" style="left:399.00px;top:351.20px;font-size:12.6px;color:#000000;-webkit-text-stroke:0.18px currentColor;letter-spacing:0.865px">Individual</span>
<span class="t" style="left:579.00px;top:351.20px;font-size:12.6px;color:#000000;-webkit-text-stroke:0.18px currentColor;letter-spacing:0.531px">General</span>
<span class="t" style="left:759.00px;top:351.20px;font-size:12.6px;color:#000000;-webkit-text-stroke:0.18px currentColor;letter-spacing:0.533px">United States</span>
<span class="t" style="left:219.00px;top:371.20px;font-size:12.6px;color:#000000;-webkit-text-stroke:0.18px currentColor;letter-spacing:0.512px">Joy Mechum</span>
<span class="t" style="left:399.00px;top:371.20px;font-size:12.6px;color:#000000;-webkit-text-stroke:0.18px currentColor;letter-spacing:0.865px">Individual</span>
<span class="t" style="left:579.00px;top:371.20px;font-size:12.6px;color:#000000;-webkit-text-stroke:0.18px currentColor;letter-spacing:0.531px">General</span>
<span class="t" style="left:759.00px;top:371.20px;font-size:12.6px;color:#000000;-webkit-text-stroke:0.18px currentColor;letter-spacing:0.533px">United States</span>
<span class="t" style="left:135.70px;top:475.90px;font-size:13.4px;color:#1e1e1e;-webkit-text-stroke:0.35px currentColor;letter-spacing:0.623px">Data Import</span>
<span class="t" style="left:23.00px;top:504.90px;font-size:11.2px;color:#444444;letter-spacing:-0.436px">Ready</span>
<span class="t" style="left:123.00px;top:504.90px;font-size:11.2px;color:#444444;letter-spacing:0.146px">Accessibility: Good to go</span>
<span class="t" style="left:919.80px;top:504.90px;font-size:11.2px;color:#444444;letter-spacing:-0.942px">100%</span>
</div>
</body></html>
